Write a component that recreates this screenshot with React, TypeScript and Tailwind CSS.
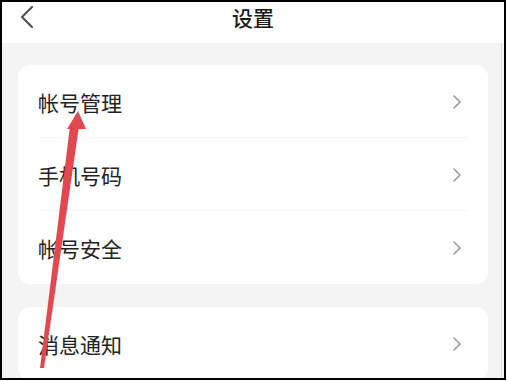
import React from "react";

const font = { fontFamily: '"Noto Sans CJK SC", "Noto Sans", sans-serif' };

function Chevron() {
  return (
    <svg width="10" height="16" viewBox="0 0 10 16" className="shrink-0">
      <path d="M2 2 L8 8 L2 14" fill="none" stroke="#9a9a9a" strokeWidth="1.6" strokeLinecap="round" strokeLinejoin="round" />
    </svg>
  );
}

function Row({ label, divider }: { label: string; divider?: boolean }) {
  return (
    <div className="relative flex h-[73px] items-center justify-between pl-[20px] pr-[26px]">
      <span className="text-[21px] leading-[24px] text-[#222]">{label}</span>
      <Chevron />
      {divider && <div className="absolute bottom-0 left-[20px] right-[20px] h-px bg-[#f5f5f5]" />}
    </div>
  );
}

export default function App() {
  return (
    <div className="relative h-[380px] w-[506px] overflow-hidden border-2 border-black bg-[#f4f4f4]" style={font}>
      <div className="relative flex h-[41px] items-start justify-center bg-white pt-[1px]">
        <svg width="16" height="24" viewBox="0 0 16 24" className="absolute left-[17px] top-[3px]">
          <path d="M13 2 L3 12 L13 22" fill="none" stroke="#555" strokeWidth="2.2" strokeLinecap="round" strokeLinejoin="round" />
        </svg>
        <span className="text-[21px] font-medium leading-[28px] text-[#1a1a1a]">设置</span>
      </div>
      <div className="flex flex-col gap-[23px] pt-[22px] pl-[16px]">
        <div className="w-[470px] rounded-[12px] bg-white">
          <Row label="帐号管理" divider />
          <Row label="手机号码" divider />
          <Row label="帐号安全" />
        </div>
        <div className="w-[470px] rounded-[12px] bg-white">
          <Row label="消息通知" />
        </div>
      </div>
      <div className="absolute right-[2px] top-[41px] bottom-0 w-px bg-[#dcdcdc]" />
      <svg className="absolute left-[-2px] top-[-2px]" width="507" height="381" viewBox="0 0 507 381">
        <polygon points="70,126 79,126 44,368 40,368" fill="#e34850" />
        <polygon points="78,111 67,129 86,129" fill="#e34850" />
      </svg>
    </div>
  );
}
